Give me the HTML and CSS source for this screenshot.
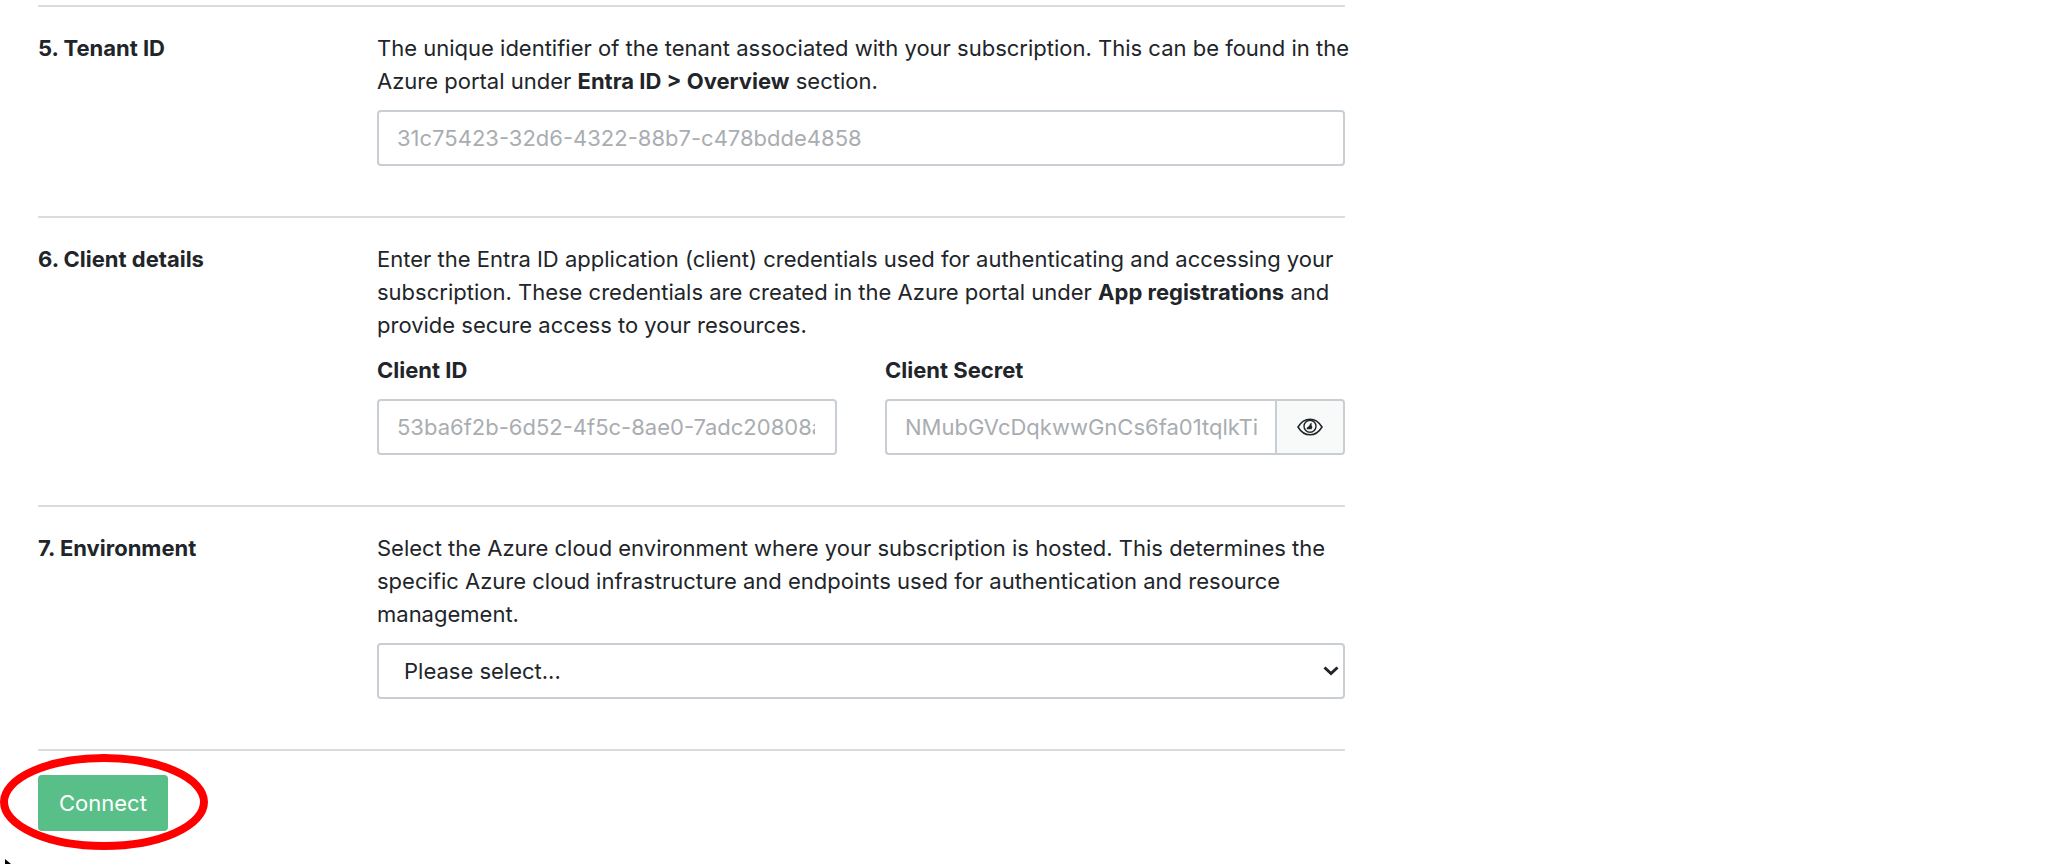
FILE: index.html
```html
<!DOCTYPE html>
<html lang="en">
<head>
<meta charset="utf-8">
<title>Connect Azure subscription</title>
<link rel="stylesheet" href="styles.css">
</head>
<body>
<form class="form">
  <section class="row">
    <h2 class="row-title"><label for="tenant">5. Tenant ID</label></h2>
    <div class="row-body">
      <p class="text">The unique identifier of the tenant associated with your subscription. This can be found in the Azure portal under <strong>Entra ID &gt; Overview</strong> section.</p>
      <input class="control" id="tenant" type="text" placeholder="31c75423-32d6-4322-88b7-c478bdde4858">
    </div>
  </section>
  <section class="row">
    <h2 class="row-title">6. Client details</h2>
    <div class="row-body">
      <p class="text">Enter the Entra ID application (client) credentials used for authenticating and accessing your subscription. These credentials are created in the Azure portal under <strong>App registrations</strong> and provide secure access to your resources.</p>
      <div class="pair">
        <div class="field">
          <label class="label" for="client-id">Client ID</label>
          <input class="control" id="client-id" type="text" placeholder="53ba6f2b-6d52-4f5c-8ae0-7adc20808a1b">
        </div>
        <div class="field">
          <label class="label" for="client-secret">Client Secret</label>
          <div class="group">
            <input class="control" id="client-secret" type="password" placeholder="NMubGVcDqkwwGnCs6fa01tqlkTi">
            <button class="reveal" type="button" aria-label="Show client secret">
              <svg class="eye" viewBox="0 0 26 18" fill="none" stroke="currentColor">
                <path d="M1 9C4 4 8 1.2 13 1.2S22 4 25 9C22 14 18 16.8 13 16.8S4 14 1 9Z" stroke-width="1.5"/>
                <circle cx="13" cy="8.2" r="6" stroke-width="1.4"/>
                <path d="M14.600 4.800v6.400H9.600C9.600 9.200 11 8.600 12 8.200C12.600 7 13 5.400 14.600 4.800ZM14.600 7.500a2.400 2.400 0 0 1 0 3.300Z" fill="currentColor" stroke="none"/>
              </svg>
            </button>
          </div>
        </div>
      </div>
    </div>
  </section>
  <section class="row">
    <h2 class="row-title"><label for="environment">7. Environment</label></h2>
    <div class="row-body">
      <p class="text">Select the Azure cloud environment where your subscription is hosted. This determines the specific Azure cloud infrastructure and endpoints used for authentication and resource management.</p>
      <div class="select-wrap">
        <select class="control select" id="environment">
          <option>Please select...</option>
        </select>
        <svg class="chevron" viewBox="0 0 16 10" fill="none" stroke="currentColor" stroke-width="3"><path d="M1.5 1.5 8 7.5 14.5 1.5"/></svg>
      </div>
    </div>
  </section>
  <div class="actions">
    <button class="connect" type="submit">Connect</button>
    <svg class="highlight" viewBox="0 0 208 96" fill="none" stroke="#ff0000" stroke-width="8"><ellipse cx="104" cy="48" rx="100" ry="44"/></svg>
    <svg class="pointer" viewBox="0 0 6 5"><path d="M0 0 6 5H0Z"/></svg>
  </div>
</form>
</body>
</html>
```
FILE: styles.css
```css
* {
  box-sizing: border-box;
}

body {
  margin: 0;
  background: #fff;
  color: #212529;
  font: 22px/33px Inter, "Liberation Sans", sans-serif;
}

.form {
  max-width: 1345px;
  padding: 5px 0 0 38px;
}

.row {
  display: grid;
  grid-template-columns: 339px minmax(0, 1fr);
  padding: 25px 0 50px;
  border-top: 2px solid #d9dde0;
}

.row-title {
  margin: 0;
  font-size: 22px;
  font-weight: 700;
}

.text {
  margin: 0 -12px 12px 0;
}

strong {
  font-weight: 700;
}

.control {
  display: block;
  width: 100%;
  min-width: 0;
  height: 56px;
  padding: 0 20px 0 18px;
  border: 2px solid #c8ced4;
  border-radius: 4px;
  background: #fff;
  color: #212529;
  font: inherit;
}

.control::placeholder {
  color: #a9adb2;
  opacity: 1;
}

.pair {
  display: grid;
  grid-template-columns: 1fr 1fr;
  gap: 48px;
}

.field {
  min-width: 0;
}

.label {
  display: block;
  margin-bottom: 12px;
  font-weight: 700;
}

.group {
  display: flex;
}

.group .control {
  flex: 1;
  padding-right: 12px;
  border-radius: 4px 0 0 4px;
  border-right: 0;
}

.reveal {
  display: flex;
  align-items: center;
  justify-content: center;
  width: 70px;
  padding: 0;
  border: 2px solid #c8ced4;
  border-radius: 0 4px 4px 0;
  background: #f8f9f9;
  color: #212529;
}

.eye {
  width: 26px;
  height: 18px;
}

.select-wrap {
  position: relative;
}

.select {
  appearance: none;
  padding: 0 25px;
}

.chevron {
  position: absolute;
  top: 23px;
  right: 6px;
  width: 16px;
  height: 10px;
  pointer-events: none;
}

.actions {
  position: relative;
  padding: 24px 0 33px;
  border-top: 2px solid #d9dde0;
}

.connect {
  display: block;
  height: 56px;
  padding: 0 21px;
  border: 0;
  border-radius: 4px;
  background: #59bf88;
  color: #fff;
  font: inherit;
}

.highlight {
  position: absolute;
  top: 3px;
  left: -38px;
  width: 208px;
  height: 96px;
  pointer-events: none;
}

.pointer {
  position: absolute;
  bottom: 0;
  left: -33px;
  width: 6px;
  height: 5px;
}
```
